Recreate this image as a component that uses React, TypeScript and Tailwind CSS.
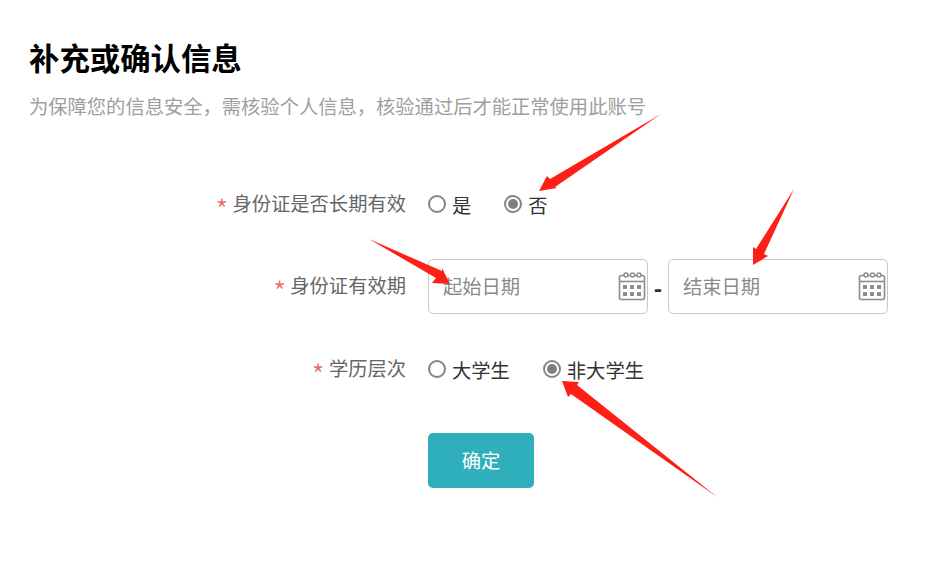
import React from 'react';

const FONT = 'font-["Microsoft_YaHei","Noto_Sans_CJK_SC",sans-serif]';

const CalendarIcon = () => (
  <svg width="28" height="30" viewBox="0 0 28 30" fill="none" stroke="#8c8c8c" className="mb-[2px] shrink-0">
    <path d="M6 4.5H3.5a2 2 0 0 0-2 2v20a2 2 0 0 0 2 2h21a2 2 0 0 0 2-2v-20a2 2 0 0 0-2-2H22" strokeWidth="1.6" />
    <path d="M10 4.5h3M16 4.5h3" strokeWidth="1.6" />
    <circle cx="8" cy="4" r="2" strokeWidth="1.4" />
    <circle cx="14.5" cy="4" r="2" strokeWidth="1.4" />
    <circle cx="21" cy="4" r="2" strokeWidth="1.4" />
    <path d="M1.5 10.5h25" strokeWidth="1.6" />
    <g fill="#8c8c8c" stroke="none">
      <rect x="5" y="14" width="4" height="4" />
      <rect x="12" y="14" width="4" height="4" />
      <rect x="19" y="14" width="4" height="4" />
      <rect x="5" y="21" width="4" height="4" />
      <rect x="12" y="21" width="4" height="4" />
      <rect x="19" y="21" width="4" height="4" />
    </g>
  </svg>
);

const Radio = ({ label, checked }: { label: string; checked?: boolean }) => (
  <label className="flex items-center gap-[6px] text-[#333]">
    <span className="mb-[2px] flex h-[18px] w-[18px] items-center justify-center rounded-full border-2 border-[#858585] bg-white">
      {checked && <span className="h-[10px] w-[10px] rounded-full bg-[#7f7f7f]" />}
    </span>
    <span className="mt-[2px]">{label}</span>
  </label>
);

const DateInput = ({ placeholder }: { placeholder: string }) => (
  <div className="flex h-[55px] w-[220px] items-center justify-between rounded-[5px] border border-[#c8c8c8] pl-[14px] pr-[1px] text-[#8a8a8a]">
    <span>{placeholder}</span>
    <CalendarIcon />
  </div>
);

const Row = ({ label, className, children }: { label: string; className?: string; children: React.ReactNode }) => (
  <div className={`flex h-[55px] items-center ${className ?? ''}`}>
    <div className="flex w-[406px] items-center justify-end pb-[2px] text-[#666]">
      <span className="mr-[4px] mt-[10px] text-[30px] font-light leading-none text-[#e86a6a]">*</span>
      <span>{label}</span>
    </div>
    <div className="ml-[22px] flex items-center">{children}</div>
  </div>
);

// red annotation arrows drawn over the form
const ARROWS = [
  '661,114 555,187 557,188 539,191 547,176 550,179',
  '369,239 442,271 442,268 450,284 432,283 436,278',
  '794,189 764,254 768,256 753,265 753,247 756,249',
  '717,497 577,385 579,382 562,381 568,397 571,394',
];

export default function App() {
  return (
    <div className={`relative h-[580px] w-[933px] overflow-hidden bg-white text-[19.3px] ${FONT}`}>
      <div className="px-[29px] pt-[36px]">
        <h1 className="text-[30.4px] font-bold leading-[42px] text-black">补充或确认信息</h1>
        <p className="mt-[12px] leading-[32px] text-[#9e9e9e]">
          为保障您的信息安全，需核验个人信息，核验通过后才能正常使用此账号
        </p>
      </div>

      <div className="mt-[55px] flex flex-col gap-[27px]">
        <Row label="身份证是否长期有效">
          <div className="flex gap-[33px]">
            <Radio label="是" />
            <Radio label="否" checked />
          </div>
        </Row>
        <Row label="身份证有效期">
          <DateInput placeholder="起始日期" />
          <span className="w-[20px] text-center text-[22px] font-black leading-none text-[#333]">-</span>
          <DateInput placeholder="结束日期" />
        </Row>
        <Row label="学历层次" className="mt-[1px]">
          <div className="flex gap-[33px]">
            <Radio label="大学生" />
            <Radio label="非大学生" checked />
          </div>
        </Row>
        <div className="ml-[428px] mt-[9px]">
          <button className="h-[55px] w-[106px] rounded-[5px] bg-[#2fafbb] text-white">确定</button>
        </div>
      </div>

      <svg className="pointer-events-none absolute left-0 top-0" width="933" height="580">
        {ARROWS.map((pts) => (
          <polygon key={pts} points={pts} fill="#ff1f17" />
        ))}
      </svg>
    </div>
  );
}
